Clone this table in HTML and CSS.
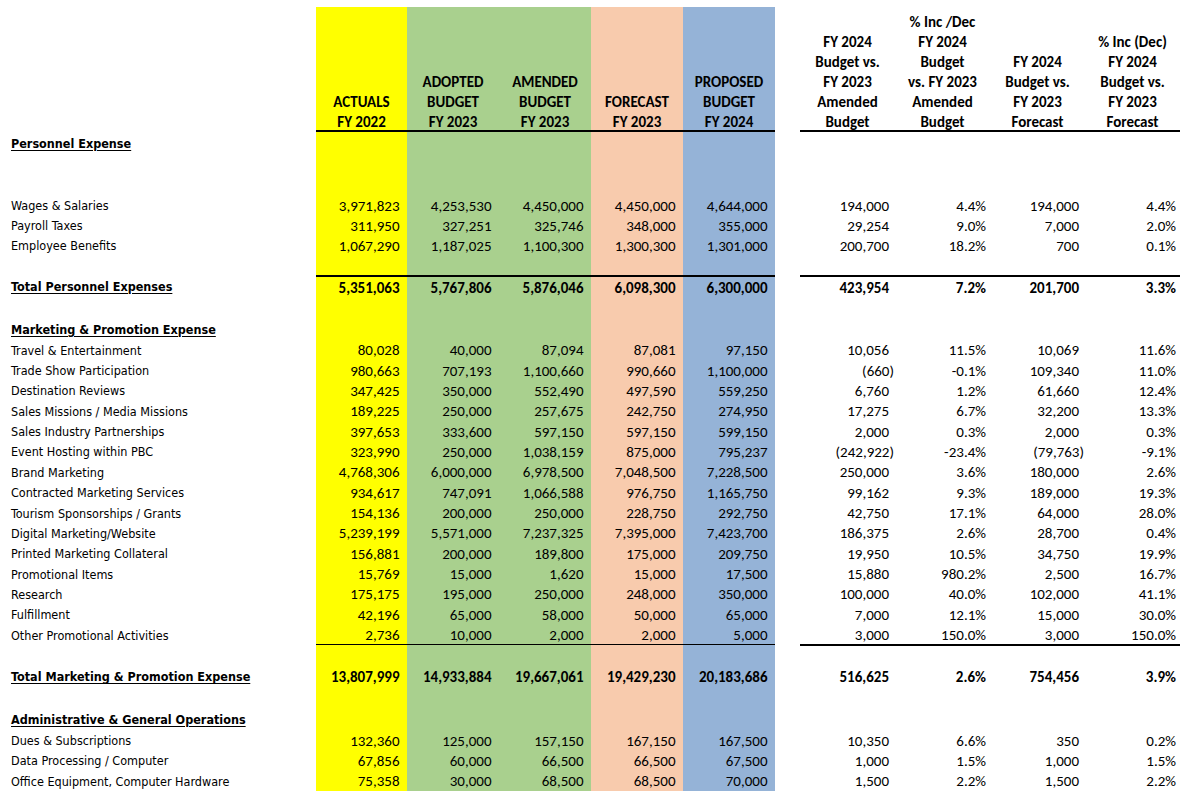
FILE: index.html
```html
<!DOCTYPE html>
<html lang="en">
<head>
<meta charset="utf-8">
<title>Budget</title>
<link rel="stylesheet" href="styles.css">
</head>
<body>
<div class="sheet">
  <div class="row head">
    <div class="lbl"></div>
    <div class="hc y"><span>ACTUALS</span><span>FY 2022</span></div>
    <div class="hc g"><span>ADOPTED</span><span>BUDGET</span><span>FY 2023</span></div>
    <div class="hc g"><span>AMENDED</span><span>BUDGET</span><span>FY 2023</span></div>
    <div class="hc p"><span>FORECAST</span><span>FY 2023</span></div>
    <div class="hc b"><span>PROPOSED</span><span>BUDGET</span><span>FY 2024</span></div>
    <div class="sp"></div>
    <div class="hc"><span>FY 2024</span><span>Budget vs.</span><span>FY 2023</span><span>Amended</span><span>Budget</span></div>
    <div class="hc"><span>% Inc /Dec</span><span>FY 2024</span><span>Budget</span><span>vs. FY 2023</span><span>Amended</span><span>Budget</span></div>
    <div class="hc"><span>FY 2024</span><span>Budget vs.</span><span>FY 2023</span><span>Forecast</span></div>
    <div class="hc"><span>% Inc (Dec)</span><span>FY 2024</span><span>Budget vs.</span><span>FY 2023</span><span>Forecast</span></div>
  </div>

  <div class="row h21">
    <div class="lbl sec">Personnel Expense</div>
    <div class="c y"></div><div class="c g"></div><div class="c g"></div><div class="c p"></div><div class="c b"></div>
    <div class="sp"></div><div class="r"></div><div class="r"></div><div class="r"></div><div class="r"></div>
  </div>
  <div class="row h42">
    <div class="lbl"></div>
    <div class="c y"></div><div class="c g"></div><div class="c g"></div><div class="c p"></div><div class="c b"></div>
    <div class="sp"></div><div class="r"></div><div class="r"></div><div class="r"></div><div class="r"></div>
  </div>
  <div class="row h20">
    <div class="lbl">Wages &amp; Salaries</div>
    <div class="c y">3,971,823</div><div class="c g">4,253,530</div><div class="c g">4,450,000</div><div class="c p">4,450,000</div><div class="c b">4,644,000</div>
    <div class="sp"></div><div class="r n">194,000</div><div class="r pc">4.4%</div><div class="r n">194,000</div><div class="r pc">4.4%</div>
  </div>
  <div class="row h20">
    <div class="lbl">Payroll Taxes</div>
    <div class="c y">311,950</div><div class="c g">327,251</div><div class="c g">325,746</div><div class="c p">348,000</div><div class="c b">355,000</div>
    <div class="sp"></div><div class="r n">29,254</div><div class="r pc">9.0%</div><div class="r n">7,000</div><div class="r pc">2.0%</div>
  </div>
  <div class="row h20">
    <div class="lbl">Employee Benefits</div>
    <div class="c y">1,067,290</div><div class="c g">1,187,025</div><div class="c g">1,100,300</div><div class="c p">1,300,300</div><div class="c b">1,301,000</div>
    <div class="sp"></div><div class="r n">200,700</div><div class="r pc">18.2%</div><div class="r n">700</div><div class="r pc">0.1%</div>
  </div>
  <div class="row h19">
    <div class="lbl"></div>
    <div class="c y"></div><div class="c g"></div><div class="c g"></div><div class="c p"></div><div class="c b"></div>
    <div class="sp"></div><div class="r"></div><div class="r"></div><div class="r"></div><div class="r"></div>
  </div>
  <div class="row h23 total rule-top">
    <div class="lbl sec">Total Personnel Expenses</div>
    <div class="c y">5,351,063</div><div class="c g">5,767,806</div><div class="c g">5,876,046</div><div class="c p">6,098,300</div><div class="c b">6,300,000</div>
    <div class="sp"></div><div class="r n">423,954</div><div class="r pc">7.2%</div><div class="r n">201,700</div><div class="r pc">3.3%</div>
  </div>
  <div class="row h20">
    <div class="lbl"></div>
    <div class="c y"></div><div class="c g"></div><div class="c g"></div><div class="c p"></div><div class="c b"></div>
    <div class="sp"></div><div class="r"></div><div class="r"></div><div class="r"></div><div class="r"></div>
  </div>

  <div class="row h22">
    <div class="lbl sec">Marketing &amp; Promotion Expense</div>
    <div class="c y"></div><div class="c g"></div><div class="c g"></div><div class="c p"></div><div class="c b"></div>
    <div class="sp"></div><div class="r"></div><div class="r"></div><div class="r"></div><div class="r"></div>
  </div>
  <div class="row hi">
    <div class="lbl">Travel &amp; Entertainment</div>
    <div class="c y">80,028</div><div class="c g">40,000</div><div class="c g">87,094</div><div class="c p">87,081</div><div class="c b">97,150</div>
    <div class="sp"></div><div class="r n">10,056</div><div class="r pc">11.5%</div><div class="r n">10,069</div><div class="r pc">11.6%</div>
  </div>
  <div class="row hi">
    <div class="lbl">Trade Show Participation</div>
    <div class="c y">980,663</div><div class="c g">707,193</div><div class="c g">1,100,660</div><div class="c p">990,660</div><div class="c b">1,100,000</div>
    <div class="sp"></div><div class="r n"><span class="neg">(660)</span></div><div class="r pc">-0.1%</div><div class="r n">109,340</div><div class="r pc">11.0%</div>
  </div>
  <div class="row hi">
    <div class="lbl">Destination Reviews</div>
    <div class="c y">347,425</div><div class="c g">350,000</div><div class="c g">552,490</div><div class="c p">497,590</div><div class="c b">559,250</div>
    <div class="sp"></div><div class="r n">6,760</div><div class="r pc">1.2%</div><div class="r n">61,660</div><div class="r pc">12.4%</div>
  </div>
  <div class="row hi">
    <div class="lbl">Sales Missions / Media Missions</div>
    <div class="c y">189,225</div><div class="c g">250,000</div><div class="c g">257,675</div><div class="c p">242,750</div><div class="c b">274,950</div>
    <div class="sp"></div><div class="r n">17,275</div><div class="r pc">6.7%</div><div class="r n">32,200</div><div class="r pc">13.3%</div>
  </div>
  <div class="row hi">
    <div class="lbl">Sales Industry Partnerships</div>
    <div class="c y">397,653</div><div class="c g">333,600</div><div class="c g">597,150</div><div class="c p">597,150</div><div class="c b">599,150</div>
    <div class="sp"></div><div class="r n">2,000</div><div class="r pc">0.3%</div><div class="r n">2,000</div><div class="r pc">0.3%</div>
  </div>
  <div class="row hi">
    <div class="lbl">Event Hosting within PBC</div>
    <div class="c y">323,990</div><div class="c g">250,000</div><div class="c g">1,038,159</div><div class="c p">875,000</div><div class="c b">795,237</div>
    <div class="sp"></div><div class="r n"><span class="neg">(242,922)</span></div><div class="r pc">-23.4%</div><div class="r n"><span class="neg">(79,763)</span></div><div class="r pc">-9.1%</div>
  </div>
  <div class="row hi">
    <div class="lbl">Brand Marketing</div>
    <div class="c y">4,768,306</div><div class="c g">6,000,000</div><div class="c g">6,978,500</div><div class="c p">7,048,500</div><div class="c b">7,228,500</div>
    <div class="sp"></div><div class="r n">250,000</div><div class="r pc">3.6%</div><div class="r n">180,000</div><div class="r pc">2.6%</div>
  </div>
  <div class="row hi">
    <div class="lbl">Contracted Marketing Services</div>
    <div class="c y">934,617</div><div class="c g">747,091</div><div class="c g">1,066,588</div><div class="c p">976,750</div><div class="c b">1,165,750</div>
    <div class="sp"></div><div class="r n">99,162</div><div class="r pc">9.3%</div><div class="r n">189,000</div><div class="r pc">19.3%</div>
  </div>
  <div class="row hi">
    <div class="lbl">Tourism Sponsorships / Grants</div>
    <div class="c y">154,136</div><div class="c g">200,000</div><div class="c g">250,000</div><div class="c p">228,750</div><div class="c b">292,750</div>
    <div class="sp"></div><div class="r n">42,750</div><div class="r pc">17.1%</div><div class="r n">64,000</div><div class="r pc">28.0%</div>
  </div>
  <div class="row hi">
    <div class="lbl">Digital Marketing/Website</div>
    <div class="c y">5,239,199</div><div class="c g">5,571,000</div><div class="c g">7,237,325</div><div class="c p">7,395,000</div><div class="c b">7,423,700</div>
    <div class="sp"></div><div class="r n">186,375</div><div class="r pc">2.6%</div><div class="r n">28,700</div><div class="r pc">0.4%</div>
  </div>
  <div class="row hi">
    <div class="lbl">Printed Marketing Collateral</div>
    <div class="c y">156,881</div><div class="c g">200,000</div><div class="c g">189,800</div><div class="c p">175,000</div><div class="c b">209,750</div>
    <div class="sp"></div><div class="r n">19,950</div><div class="r pc">10.5%</div><div class="r n">34,750</div><div class="r pc">19.9%</div>
  </div>
  <div class="row hi">
    <div class="lbl">Promotional Items</div>
    <div class="c y">15,769</div><div class="c g">15,000</div><div class="c g">1,620</div><div class="c p">15,000</div><div class="c b">17,500</div>
    <div class="sp"></div><div class="r n">15,880</div><div class="r pc">980.2%</div><div class="r n">2,500</div><div class="r pc">16.7%</div>
  </div>
  <div class="row hi">
    <div class="lbl">Research</div>
    <div class="c y">175,175</div><div class="c g">195,000</div><div class="c g">250,000</div><div class="c p">248,000</div><div class="c b">350,000</div>
    <div class="sp"></div><div class="r n">100,000</div><div class="r pc">40.0%</div><div class="r n">102,000</div><div class="r pc">41.1%</div>
  </div>
  <div class="row hi">
    <div class="lbl">Fulfillment</div>
    <div class="c y">42,196</div><div class="c g">65,000</div><div class="c g">58,000</div><div class="c p">50,000</div><div class="c b">65,000</div>
    <div class="sp"></div><div class="r n">7,000</div><div class="r pc">12.1%</div><div class="r n">15,000</div><div class="r pc">30.0%</div>
  </div>
  <div class="row hi rule-bottom">
    <div class="lbl">Other Promotional Activities</div>
    <div class="c y">2,736</div><div class="c g">10,000</div><div class="c g">2,000</div><div class="c p">2,000</div><div class="c b">5,000</div>
    <div class="sp"></div><div class="r n">3,000</div><div class="r pc">150.0%</div><div class="r n">3,000</div><div class="r pc">150.0%</div>
  </div>
  <div class="row h20b">
    <div class="lbl"></div>
    <div class="c y"></div><div class="c g"></div><div class="c g"></div><div class="c p"></div><div class="c b"></div>
    <div class="sp"></div><div class="r"></div><div class="r"></div><div class="r"></div><div class="r"></div>
  </div>
  <div class="row h21 total">
    <div class="lbl sec">Total Marketing &amp; Promotion Expense</div>
    <div class="c y">13,807,999</div><div class="c g">14,933,884</div><div class="c g">19,667,061</div><div class="c p">19,429,230</div><div class="c b">20,183,686</div>
    <div class="sp"></div><div class="r n">516,625</div><div class="r pc">2.6%</div><div class="r n">754,456</div><div class="r pc">3.9%</div>
  </div>
  <div class="row h21">
    <div class="lbl"></div>
    <div class="c y"></div><div class="c g"></div><div class="c g"></div><div class="c p"></div><div class="c b"></div>
    <div class="sp"></div><div class="r"></div><div class="r"></div><div class="r"></div><div class="r"></div>
  </div>

  <div class="row h22">
    <div class="lbl sec">Administrative &amp; General Operations</div>
    <div class="c y"></div><div class="c g"></div><div class="c g"></div><div class="c p"></div><div class="c b"></div>
    <div class="sp"></div><div class="r"></div><div class="r"></div><div class="r"></div><div class="r"></div>
  </div>
  <div class="row hi">
    <div class="lbl">Dues &amp; Subscriptions</div>
    <div class="c y">132,360</div><div class="c g">125,000</div><div class="c g">157,150</div><div class="c p">167,150</div><div class="c b">167,500</div>
    <div class="sp"></div><div class="r n">10,350</div><div class="r pc">6.6%</div><div class="r n">350</div><div class="r pc">0.2%</div>
  </div>
  <div class="row hi">
    <div class="lbl">Data Processing / Computer</div>
    <div class="c y">67,856</div><div class="c g">60,000</div><div class="c g">66,500</div><div class="c p">66,500</div><div class="c b">67,500</div>
    <div class="sp"></div><div class="r n">1,000</div><div class="r pc">1.5%</div><div class="r n">1,000</div><div class="r pc">1.5%</div>
  </div>
  <div class="row hi">
    <div class="lbl">Office Equipment, Computer Hardware</div>
    <div class="c y">75,358</div><div class="c g">30,000</div><div class="c g">68,500</div><div class="c p">68,500</div><div class="c b">70,000</div>
    <div class="sp"></div><div class="r n">1,500</div><div class="r pc">2.2%</div><div class="r n">1,500</div><div class="r pc">2.2%</div>
  </div>
</div>
</body>
</html>
```

FILE: styles.css
```css
html, body {
  margin: 0;
  padding: 0;
  background: #ffffff;
  color: #000000;
}

.sheet {
  width: 1180px;
  padding-top: 7px;
}

.row {
  display: grid;
  grid-template-columns: 316px 91px 92px 92px 92px 92px 25px 95px 95px 95px 95px;
}

.h19 { height: 19.5px; }
.h20 { height: 20px; }
.h20b { height: 21px; }
.h21 { height: 21px; }
.h22 { height: 22px; }
.h23 { height: 23px; }
.h42 { height: 42px; }
.hi  { height: 20.36px; }

.row > div {
  box-sizing: border-box;
  display: flex;
  align-items: center;
}

.lbl {
  padding-left: 11px;
  padding-top: 1px;
  font-family: "DejaVu Sans", Verdana, sans-serif;
  font-stretch: condensed;
  font-size: 12.5px;
  white-space: nowrap;
}

.lbl.sec {
  font-weight: bold;
  text-decoration: underline;
  text-decoration-thickness: 1px;
  text-underline-offset: 2px;
}

.c, .r {
  justify-content: flex-end;
  padding-top: 1px;
  font-family: "Carlito", "Lato", sans-serif;
  font-size: 15px;
  white-space: nowrap;
}

.c { padding-right: 7.5px; }
.r.n { padding-right: 6px; }
.r.pc { padding-right: 4px; }

.y { background: #ffff00; }
.g { background: #a9d08e; }
.p { background: #f8cbad; }
.b { background: #95b3d7; }

.neg {
  margin-right: -5px;
}

.total .c, .total .r {
  font-weight: bold;
}

.head {
  height: 125px;
}

.head .hc {
  flex-direction: column;
  justify-content: flex-end;
  align-items: center;
  border-bottom: 2px solid #000;
  font-family: "Carlito", "Lato", sans-serif;
  font-weight: bold;
  font-size: 15px;
  line-height: 20px;
  white-space: nowrap;
}

.head .hc span:last-child {
  margin-bottom: -2px;
}

.rule-top .c, .rule-top .r {
  border-top: 2px solid #000;
}

.rule-bottom .c, .rule-bottom .r {
  border-bottom: 2px solid #000;
}
```
